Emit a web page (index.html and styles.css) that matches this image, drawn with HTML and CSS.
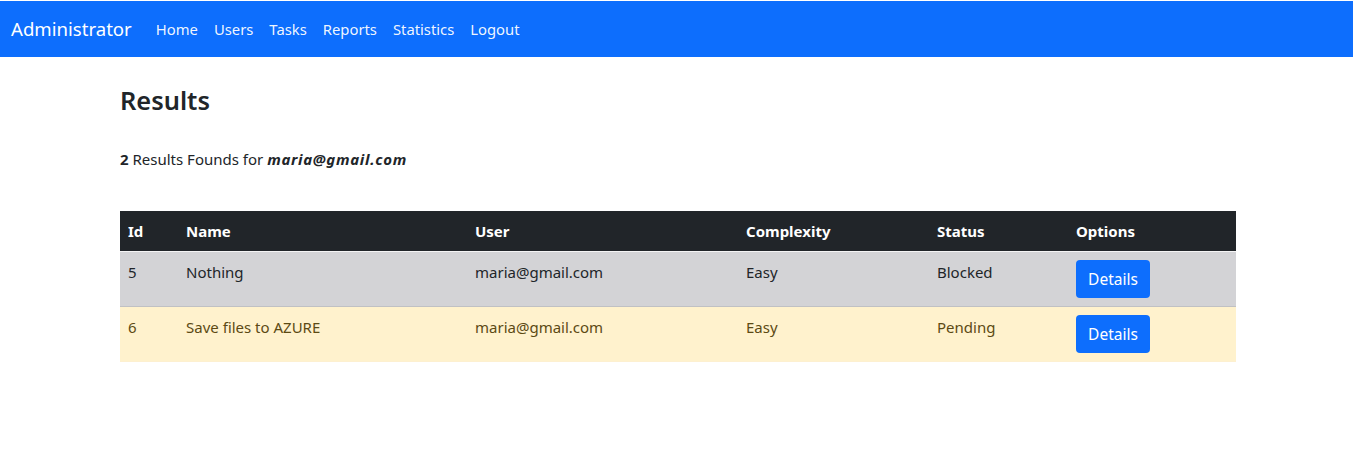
FILE: index.html
```html
<!DOCTYPE html>
<html lang="en">
<head>
<meta charset="utf-8">
<title>Results</title>
<link rel="stylesheet" href="styles.css">
</head>
<body>
<nav class="navbar">
  <a class="brand" href="#">Administrator</a>
  <ul class="nav-links">
    <li><a href="#">Home</a></li>
    <li><a href="#">Users</a></li>
    <li><a href="#">Tasks</a></li>
    <li><a href="#">Reports</a></li>
    <li><a href="#">Statistics</a></li>
    <li><a href="#">Logout</a></li>
  </ul>
</nav>
<main class="container">
  <h3 class="title">Results</h3>
  <p class="summary"><b>2</b> Results Founds for <b class="email"><i>maria@gmail.com</i></b></p>
  <table class="results">
    <colgroup>
      <col class="c-id"><col class="c-name"><col class="c-user"><col class="c-cx"><col class="c-status"><col class="c-opt">
    </colgroup>
    <thead>
      <tr><th>Id</th><th>Name</th><th>User</th><th>Complexity</th><th>Status</th><th>Options</th></tr>
    </thead>
    <tbody>
      <tr class="row-secondary">
        <td>5</td><td>Nothing</td><td>maria@gmail.com</td><td>Easy</td><td>Blocked</td>
        <td><button class="btn">Details</button></td>
      </tr>
      <tr class="row-warning">
        <td>6</td><td>Save files to AZURE</td><td>maria@gmail.com</td><td>Easy</td><td>Pending</td>
        <td><button class="btn">Details</button></td>
      </tr>
    </tbody>
  </table>
</main>
</body>
</html>
```
FILE: styles.css
```css
* { box-sizing: border-box; }
body {
  margin: 0;
  font-family: "Noto Sans", "Open Sans", sans-serif;
  font-size: 15px;
  line-height: 1.5;
  color: #212529;
  background: #fff;
}
.navbar {
  margin-top: 1px;
  height: 56px;
  background: #0d6efd;
  display: flex;
  align-items: center;
  padding: 0 11px;
}
.brand {
  color: #fff;
  text-decoration: none;
  font-size: 18.6px;
  margin-right: 16px;
}
.nav-links {
  list-style: none;
  margin: 0;
  padding: 0;
  display: flex;
}
.nav-links a {
  display: block;
  color: rgba(255,255,255,0.95);
  text-decoration: none;
  font-size: 14.8px;
  padding: 8px;
}
.container {
  width: 1116px;
  margin-left: calc(50% - 556.5px);
}
.title {
  margin: 28px 0 0;
  font-size: 25.4px;
  font-weight: 600;
  line-height: 1.2;
}
.summary {
  margin: 33px 0 0;
  font-size: 15px;
}
.summary b { font-weight: 700; }
.summary .email { letter-spacing: 0.7px; }
.results {
  margin-top: 40px;
  width: 100%;
  border-collapse: separate;
  border-spacing: 0;
  table-layout: fixed;
}
.c-id { width: 58px; }
.c-name { width: 289px; }
.c-user { width: 271px; }
.c-cx { width: 191px; }
.c-status { width: 139px; }
.c-opt { width: 168px; }
.results th {
  background: #212529;
  color: #fff;
  text-align: left;
  font-weight: 700;
  padding: 8px;
  line-height: 24px;
  border-bottom: 1px solid #f4f4f5;
}
.results td {
  padding: 8px;
  line-height: 24px;
  vertical-align: top;
  border-bottom: 1px solid #c0c1c4;
}
.row-secondary td { background: #d3d3d6; color: #212529; }
.row-warning td { background: #fff2cd; color: #5c4a14; border-bottom-color: #fdf0d0; }
.btn {
  display: block;
  width: 74px;
  height: 38px;
  background: #0d6efd;
  color: #fff;
  border: none;
  border-radius: 4px;
  font-family: inherit;
  font-size: 15.5px;
  cursor: pointer;
}
```
